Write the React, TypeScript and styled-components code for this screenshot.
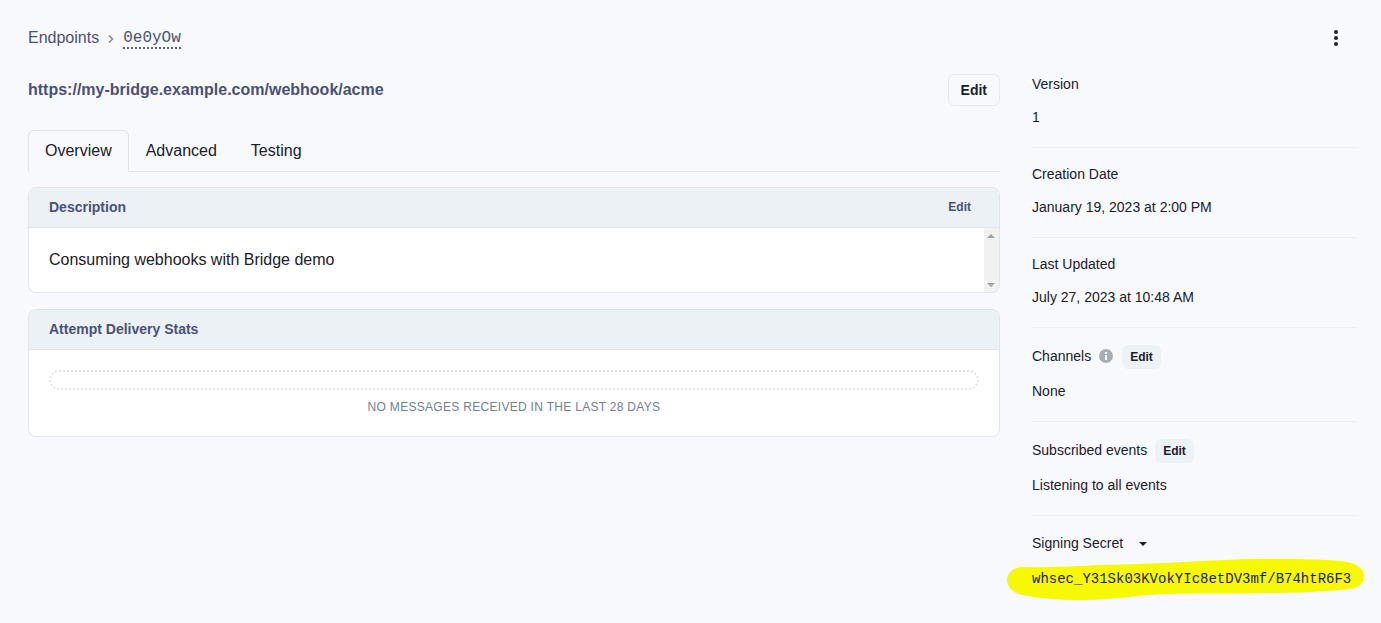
import React from "react";
import styled, { createGlobalStyle } from "styled-components";

const GlobalStyle = createGlobalStyle`
  html, body {
    margin: 0;
    padding: 0;
    background: #f8f9fd;
    font-family: "Liberation Sans", Arial, sans-serif;
    color: #1a202c;
  }
  * {
    box-sizing: border-box;
  }
`;

const Page = styled.div`
  min-height: 623px;
  padding: 24px 25px 0 28px;
`;

const TopBar = styled.div`
  display: flex;
  align-items: center;
  justify-content: space-between;
  height: 28px;
  margin-bottom: 22px;
`;

const Breadcrumb = styled.div`
  display: flex;
  align-items: center;
  font-size: 16px;
  color: #4a5178;
`;

const Chevron = styled.svg`
  width: 8px;
  height: 8px;
  margin: 1px 8px 0;
  fill: none;
  stroke: #7d8494;
  stroke-width: 1.5;
`;

const EndpointId = styled.span`
  margin-top: 2px;
  font-family: "Liberation Mono", monospace;
  font-size: 16px;
  line-height: 18px;
  border-bottom: 2px dotted #5a6085;
`;

const MenuButton = styled.button`
  display: flex;
  flex-direction: column;
  align-items: center;
  gap: 2px;
  width: 40px;
  padding: 0;
  border: 0;
  background: none;
  span {
    width: 4px;
    height: 4px;
    border-radius: 50%;
    background: #1a202c;
  }
`;

const Columns = styled.div`
  display: flex;
  gap: 32px;
`;

const Main = styled.div`
  flex: 0 0 972px;
`;

const Side = styled.div`
  flex: 1;
  margin-top: -2px;
`;

const UrlRow = styled.div`
  display: flex;
  align-items: flex-start;
  justify-content: space-between;
  height: 56px;
  padding-top: 7px;
`;

const Url = styled.div`
  font-size: 16px;
  font-weight: 700;
  line-height: 18px;
  color: #4a5178;
`;

const EditButton = styled.button`
  height: 32px;
  padding: 0 12px;
  margin-top: -7px;
  font-family: inherit;
  font-size: 14px;
  font-weight: 700;
  color: #1a202c;
  background: transparent;
  border: 1px solid #e8ebf2;
  border-radius: 6px;
`;

const Tabs = styled.div`
  display: flex;
  height: 42px;
  margin-bottom: 15px;
  border-bottom: 1px solid #e2e4ec;
`;

const Tab = styled.div<{ $active?: boolean }>`
  height: 42px;
  padding: 0 16px;
  font-size: 16px;
  line-height: 40px;
  color: #1a202c;
  border: 1px solid ${(p) => (p.$active ? "#e2e4ec" : "transparent")};
  border-bottom-color: ${(p) => (p.$active ? "#f8f9fd" : "transparent")};
  border-radius: 6px 6px 0 0;
`;

const Card = styled.div`
  margin-bottom: 16px;
  background: #fff;
  border: 1px solid #e2e4ec;
  border-radius: 8px;
  overflow: hidden;
`;

const CardHeader = styled.div`
  display: flex;
  align-items: center;
  justify-content: space-between;
  height: 40px;
  padding: 0 28px 2px 20px;
  background: #ecf1f6;
  border-bottom: 1px solid #e2e4ec;
`;

const CardTitle = styled.div`
  font-size: 14px;
  font-weight: 700;
  color: #4a5178;
`;

const CardEdit = styled.div`
  font-size: 12px;
  font-weight: 700;
  color: #4a5178;
`;

const DescriptionBody = styled.div`
  display: flex;
  height: 64px;
`;

const DescriptionText = styled.div`
  flex: 1;
  padding: 23px 20px 0;
  font-size: 16px;
  line-height: 18px;
`;

const Scrollbar = styled.div`
  display: flex;
  flex-direction: column;
  align-items: center;
  justify-content: space-between;
  width: 15px;
  padding: 6px 1px 5px 0;
  background: #f1f1f1;
`;

const Arrow = styled.div<{ $down?: boolean }>`
  width: 0;
  height: 0;
  border-left: 4px solid transparent;
  border-right: 4px solid transparent;
  ${(p) =>
    p.$down ? "border-top: 4px solid #a3a3a3;" : "border-bottom: 4px solid #a3a3a3;"}
`;

const StatsBody = styled.div`
  height: 86px;
  padding: 20px 20px 0;
`;

const EmptyBar = styled.div`
  height: 20px;
  border: 2px dotted #e2e4ec;
  border-radius: 10px;
`;

const EmptyText = styled.div`
  margin-top: 10px;
  font-size: 12px;
  line-height: 14px;
  letter-spacing: 0.3px;
  text-align: center;
  color: #718096;
`;

const Section = styled.div<{ $last?: boolean }>`
  padding-bottom: 18px;
  margin-bottom: 14px;
  border-bottom: ${(p) => (p.$last ? "none" : "1px solid #edeff3")};
`;

const Label = styled.div<{ $height?: number }>`
  display: flex;
  align-items: center;
  height: ${(p) => p.$height ?? 24}px;
  margin-bottom: 9px;
  font-size: 14px;
  color: #1a202c;
`;

const Value = styled.div`
  height: 24px;
  font-size: 14px;
  line-height: 24px;
  color: #1a202c;
`;

const InfoIcon = styled.svg`
  width: 14px;
  height: 14px;
  margin: 0 1px 0 8px;
`;

const SmallEdit = styled.button`
  height: 24px;
  padding: 0 8px;
  margin: 2px 0 0 8px;
  font-family: inherit;
  font-size: 12px;
  font-weight: 700;
  color: #1a202c;
  background: #edf2f7;
  border: 0;
  border-radius: 6px;
`;

const Caret = styled.div`
  width: 0;
  height: 0;
  margin-left: 16px;
  margin-top: 2px;
  border-left: 4.5px solid transparent;
  border-right: 4.5px solid transparent;
  border-top: 4.5px solid #1a202c;
`;

const SecretWrap = styled.div`
  position: relative;
  height: 24px;
  margin-top: 11px;
`;

const Highlight = styled.svg`
  position: absolute;
  left: -25px;
  top: -10px;
  width: 357px;
  height: 44px;
  fill: #f7f900;
`;

const Secret = styled.code`
  position: relative;
  display: block;
  font-family: "Liberation Mono", monospace;
  font-size: 14px;
  line-height: 24px;
  color: #1a202c;
  white-space: nowrap;
`;

const App = () => {
  return (
    <Page>
      <GlobalStyle />
      <TopBar>
        <Breadcrumb>
          Endpoints
          <Chevron viewBox="0 0 8 8">
            <path d="M2 0.5 L5.5 4 L2 7.5" />
          </Chevron>
          <EndpointId>0e0yOw</EndpointId>
        </Breadcrumb>
        <MenuButton aria-label="More">
          <span />
          <span />
          <span />
        </MenuButton>
      </TopBar>
      <Columns>
        <Main>
          <UrlRow>
            <Url>https://my-bridge.example.com/webhook/acme</Url>
            <EditButton>Edit</EditButton>
          </UrlRow>
          <Tabs>
            <Tab $active>Overview</Tab>
            <Tab>Advanced</Tab>
            <Tab>Testing</Tab>
          </Tabs>
          <Card>
            <CardHeader>
              <CardTitle>Description</CardTitle>
              <CardEdit>Edit</CardEdit>
            </CardHeader>
            <DescriptionBody>
              <DescriptionText>Consuming webhooks with Bridge demo</DescriptionText>
              <Scrollbar>
                <Arrow />
                <Arrow $down />
              </Scrollbar>
            </DescriptionBody>
          </Card>
          <Card>
            <CardHeader>
              <CardTitle>Attempt Delivery Stats</CardTitle>
            </CardHeader>
            <StatsBody>
              <EmptyBar />
              <EmptyText>NO MESSAGES RECEIVED IN THE LAST 28 DAYS</EmptyText>
            </StatsBody>
          </Card>
        </Main>
        <Side>
          <Section>
            <Label>Version</Label>
            <Value>1</Value>
          </Section>
          <Section>
            <Label>Creation Date</Label>
            <Value>January 19, 2023 at 2:00 PM</Value>
          </Section>
          <Section>
            <Label>Last Updated</Label>
            <Value>July 27, 2023 at 10:48 AM</Value>
          </Section>
          <Section>
            <Label $height={28}>
              Channels
              <InfoIcon viewBox="0 0 14 14">
                <circle cx="7" cy="7" r="7" fill="#a9adb5" />
                <rect x="6" y="6" width="2" height="5" fill="#f8f9fd" />
                <rect x="6" y="3" width="2" height="2" fill="#f8f9fd" />
              </InfoIcon>
              <SmallEdit>Edit</SmallEdit>
            </Label>
            <Value>None</Value>
          </Section>
          <Section>
            <Label $height={28}>
              Subscribed events
              <SmallEdit>Edit</SmallEdit>
            </Label>
            <Value>Listening to all events</Value>
          </Section>
          <Section $last>
            <Label $height={26}>
              Signing Secret
              <Caret />
            </Label>
            <SecretWrap>
              <Highlight viewBox="0 0 357 44" preserveAspectRatio="none">
                <path d="M14 10 C40 11 70 9 93 8 C120 7 140 7 160 6 C195 4 230 2 260 2 C290 2 320 2 340 5 C350 7 357 12 357 19 C357 27 350 31 343 32 C315 35 290 36 260 36 C225 37 190 36 160 37 C130 38 105 43 76 43 C50 43 28 41 12 37 C5 35 0 29 0 23 C0 16 6 11 14 10 Z" />
              </Highlight>
              <Secret>whsec_Y31Sk03KVokYIc8etDV3mf/B74htR6F3</Secret>
            </SecretWrap>
          </Section>
        </Side>
      </Columns>
    </Page>
  );
};

export default App;
